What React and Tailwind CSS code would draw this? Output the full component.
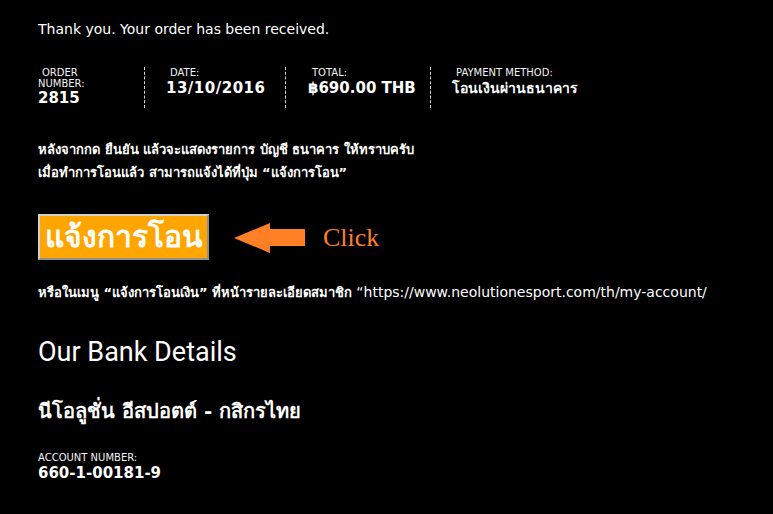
import React from 'react';

const body = { fontFamily: 'Tahoma, "DejaVu Sans", "Liberation Sans", sans-serif' };
const num = { fontFamily: 'Verdana, "DejaVu Sans", sans-serif' };

export default function App() {
  return (
    <div className="min-h-screen w-full bg-black text-white px-[38px] pt-[19px]" style={body}>
      <p className="text-[14px] leading-[20px]">Thank you. Your order has been received.</p>

      {/* Detalles del pedido */}
      <div className="flex mt-[28px]">
        <div className="flex flex-col w-[107px] border-r border-dashed border-gray-300 h-[41px]">
          <span className="text-[10px] leading-[11px] text-gray-100 pl-1">ORDER</span>
          <span className="text-[10px] leading-[11px] text-gray-100">NUMBER:</span>
          <span className="text-[15px] font-bold leading-[18px]" style={num}>2815</span>
        </div>
        <div className="flex flex-col w-[141px] pl-[21px] border-r border-dashed border-gray-300 h-[41px]">
          <span className="text-[10px] leading-[11px] text-gray-100 pl-1">DATE:</span>
          <span className="text-[15px] font-bold leading-[20px] tracking-[0.5px]" style={num}>13/10/2016</span>
        </div>
        <div className="flex flex-col w-[145px] pl-[22px] border-r border-dashed border-gray-300 h-[41px]">
          <span className="text-[10px] leading-[11px] text-gray-100 pl-1">TOTAL:</span>
          <span className="text-[15px] font-bold leading-[20px]" style={num}>฿690.00 THB</span>
        </div>
        <div className="flex flex-col pl-[21px] h-[41px]">
          <span className="text-[10px] leading-[11px] text-gray-100 pl-1">PAYMENT METHOD:</span>
          <span className="text-[14px] font-bold leading-[20px]">โอนเงินผ่านธนาคาร</span>
        </div>
      </div>

      {/* Instrucciones */}
      <div className="mt-[30px] text-[13px] font-bold leading-[23px]">
        <p>หลังจากกด ยืนยัน แล้วจะแสดงรายการ บัญชี ธนาคาร ให้ทราบครับ</p>
        <p>เมื่อทำการโอนแล้ว สามารถแจ้งได้ที่ปุ่ม “แจ้งการโอน”</p>
      </div>

      {/* Botón de notificación */}
      <div className="flex items-center mt-[30px]">
        <button className="w-[171px] h-[46px] bg-[#ffa500] border-2 border-t-[#d0d0d0] border-l-[#d0d0d0] border-r-[#909090] border-b-[#909090] text-white text-[30px] font-bold leading-none flex items-center justify-center">
          แจ้งการโอน
        </button>
        <svg width="72" height="31" viewBox="0 0 72 31" className="ml-[25px] mt-[2px]">
          <path d="M0 15 L36 0 L36 6 L71 6 L71 23 L36 23 L36 30 Z" fill="#ff7f27" />
        </svg>
        <span className="ml-[17px] text-[26px] text-[#ff7f27]" style={{ fontFamily: '"Liberation Serif", serif' }}>
          Click
        </span>
      </div>

      <p className="mt-[22px] text-[13px] leading-[20px]">
        <span className="font-bold">หรือในเมนู “แจ้งการโอนเงิน” ที่หน้ารายละเอียดสมาชิก</span>{' '}
        <span className="text-[14px]">“https://www.neolutionesport.com/th/my-account/</span>
      </p>

      <h2 className="mt-[32px] text-[27px] leading-[34px]" style={{ fontFamily: 'Roboto, sans-serif' }}>
        Our Bank Details
      </h2>

      <h3 className="mt-[27px] text-[20px] font-semibold leading-[30px]">นีโอลูชั่น อีสปอตต์ - กสิกรไทย</h3>

      <div className="mt-[26px]">
        <p className="text-[10px] leading-[11px] text-gray-100">ACCOUNT NUMBER:</p>
        <p className="text-[15px] font-bold leading-[20px]" style={num}>660-1-00181-9</p>
      </div>
    </div>
  );
}
